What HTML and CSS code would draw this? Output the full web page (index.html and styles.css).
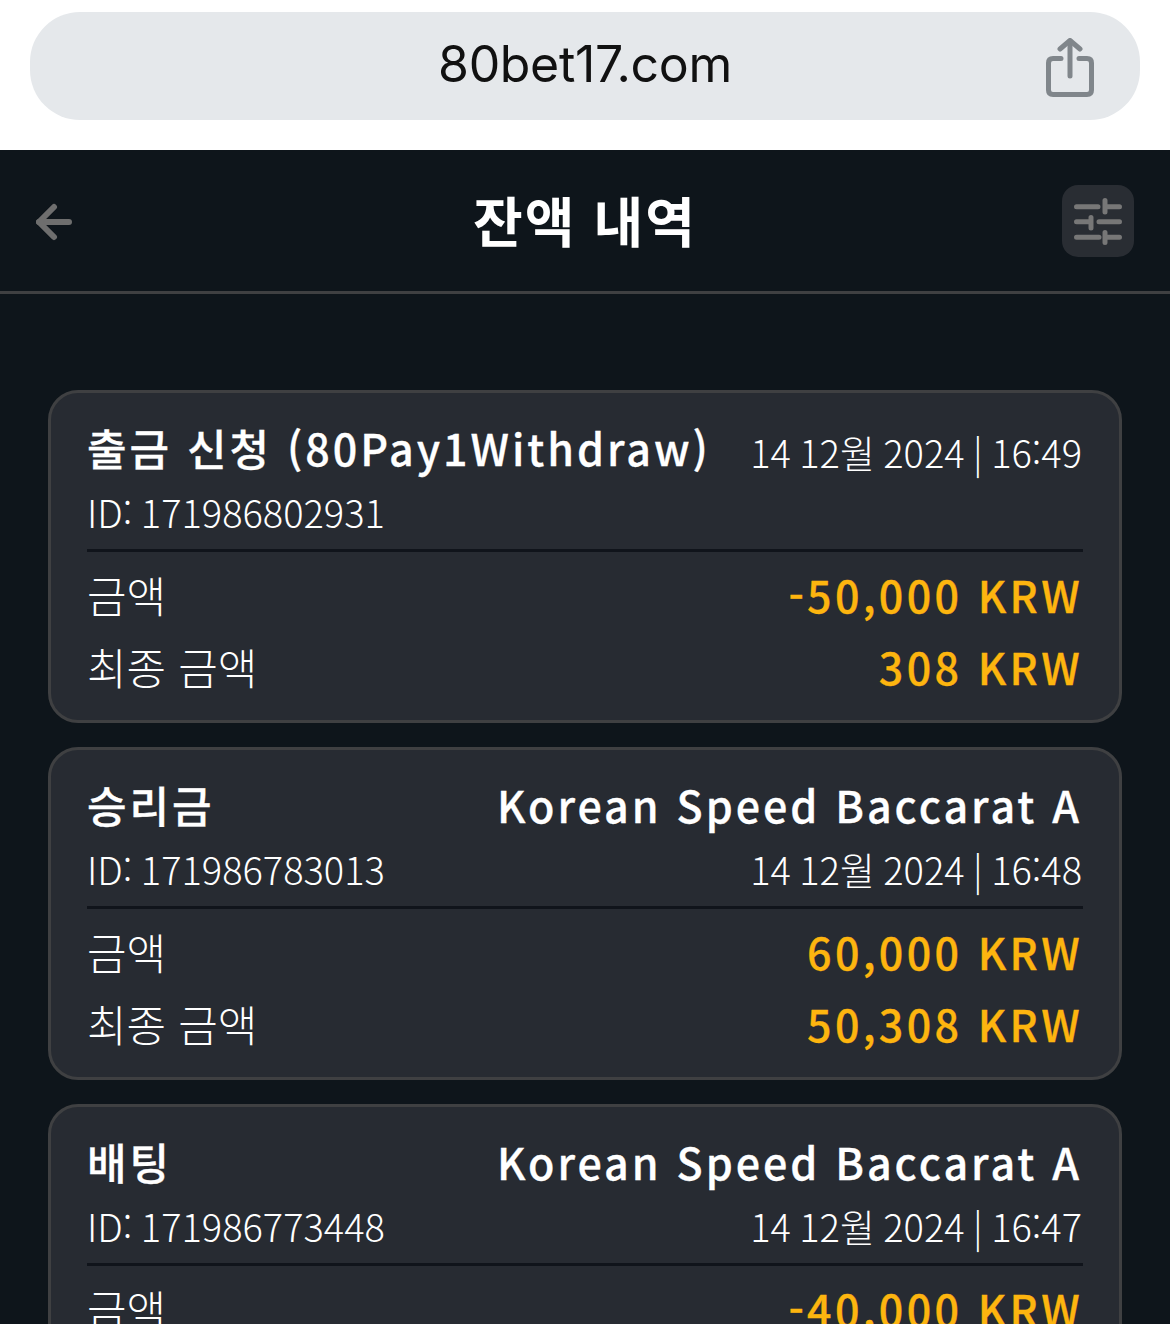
FILE: index.html
```html
<!DOCTYPE html>
<html lang="ko">
  <head>
    <meta charset="UTF-8" />
    <meta name="viewport" content="width=device-width, initial-scale=1.0" />
    <title>잔액 내역</title>
    <link rel="stylesheet" href="styles.css">
  </head>
  <body>
    <!-- Browser address bar -->
    <div class="browser-bar">
      <div class="address">
        <span class="url">80bet17.com</span>
        <svg class="share" width="50" height="60" viewBox="0 0 50 60" fill="none" stroke="#80868b" stroke-width="5" stroke-linecap="round" stroke-linejoin="round">
          <path d="M16 20.500H8Q3.500 20.500 3.500 25V52Q3.500 56.500 8 56.500H42Q46.500 56.500 46.500 52V25Q46.500 20.500 42 20.500H34" />
          <path d="M25 38V3" />
          <path d="M15 11L25 2.500L35 11" />
        </svg>
      </div>
    </div>

    <header class="topbar">
      <svg class="back" width="38" height="38" viewBox="0 0 38 38" fill="none" stroke="#6e6e6e" stroke-width="6" stroke-linecap="round" stroke-linejoin="round">
        <path d="M33 19H3" />
        <path d="M18 4L3 19L18 34" />
      </svg>
      <h1>잔액 내역</h1>
      <button class="filter">
        <svg width="48" height="48" viewBox="0 0 48 48" fill="none" stroke="#777" stroke-width="5" stroke-linecap="round">
          <path d="M2.500 9.700H24M31 9.700H45.500M31 3.500V15" />
          <path d="M2.500 24.700H17M25 24.700H45.500M17 20.500V31" />
          <path d="M2.500 40.300H25M31 40.300H45.500M31 35.500V45.500" />
        </svg>
      </button>
    </header>

    <main class="list">
      <section class="card">
        <div class="row title-row">
          <h2>출금 신청 (80Pay1Withdraw)</h2>
          <span class="meta">14 12월 2024 | 16:49</span>
        </div>
        <div class="row sub">
          <span class="meta">ID: 171986802931</span>
        </div>
        <div class="amounts">
          <div class="row line"><span>금액</span><strong>-50,000 KRW</strong></div>
          <div class="row line"><span>최종 금액</span><strong>308 KRW</strong></div>
        </div>
      </section>

      <section class="card">
        <div class="row title-row">
          <h2>승리금</h2>
          <h2>Korean Speed Baccarat A</h2>
        </div>
        <div class="row sub">
          <span class="meta">ID: 171986783013</span>
          <span class="meta">14 12월 2024 | 16:48</span>
        </div>
        <div class="amounts">
          <div class="row line"><span>금액</span><strong>60,000 KRW</strong></div>
          <div class="row line"><span>최종 금액</span><strong>50,308 KRW</strong></div>
        </div>
      </section>

      <section class="card">
        <div class="row title-row">
          <h2>배팅</h2>
          <h2>Korean Speed Baccarat A</h2>
        </div>
        <div class="row sub">
          <span class="meta">ID: 171986773448</span>
          <span class="meta">14 12월 2024 | 16:47</span>
        </div>
        <div class="amounts">
          <div class="row line"><span>금액</span><strong>-40,000 KRW</strong></div>
        </div>
      </section>
    </main>
  </body>
</html>
```

FILE: styles.css
```css
/* General Reset */
* {
  margin: 0;
  padding: 0;
  box-sizing: border-box;
}

html,
body {
  height: 1324px;
  overflow: hidden;
}

body {
  font-family: "Noto Sans CJK KR", "Noto Sans", sans-serif;
  background: #0e151b;
  color: #fff;
}

/* Browser bar */
.browser-bar {
  height: 150px;
  background: #fff;
  padding: 12px 30px 30px;
}

.address {
  position: relative;
  height: 108px;
  border-radius: 50px;
  background: #e5e8eb;
  padding-bottom: 4px;
  display: flex;
  justify-content: center;
  align-items: center;
}

.url {
  font-family: Inter, "Liberation Sans", sans-serif;
  font-size: 50px;
  letter-spacing: -0.36px;
  color: #111;
}

.share {
  position: absolute;
  top: 26px;
  right: 45px;
}

/* Header */
.topbar {
  height: 144px;
  border-bottom: 3px solid #3f4042;
  padding: 0 36px;
  display: flex;
  justify-content: space-between;
  align-items: center;
  position: relative;
}

.back {
  margin-top: 3px;
}

.topbar h1 {
  position: absolute;
  left: 0;
  right: 0;
  padding-bottom: 2px;
  text-align: center;
  font-size: 54px;
  font-weight: 700;
  letter-spacing: 2px;
  line-height: 1;
}

.filter {
  width: 72px;
  height: 72px;
  border: 0;
  border-radius: 16px;
  background: #292d33;
  display: flex;
  justify-content: center;
  align-items: center;
}

/* Cards */
.list {
  padding: 96px 48px 0;
  display: flex;
  flex-direction: column;
  gap: 24px;
}

.card {
  height: 333px;
  flex-shrink: 0;
  background: #272b32;
  border: 3px solid #3f4042;
  border-radius: 30px;
  padding: 21px 37px 0 36px;
}

.row {
  display: flex;
  justify-content: space-between;
  align-items: center;
}

.title-row {
  height: 66px;
}

.title-row .meta {
  margin-top: 10px;
}

.card h2 {
  font-size: 43px;
  font-weight: 500;
  -webkit-text-stroke: 0.3px #fff;
  letter-spacing: 2.95px;
  line-height: 1;
  white-space: nowrap;
}

.meta {
  font-size: 38px;
  font-weight: 300;
  word-spacing: -2.2px;
  line-height: 1;
  white-space: nowrap;
}

.sub {
  height: 64px;
  margin-bottom: 5px;
}

.amounts {
  border-top: 3px solid #10141b;
  margin-right: -1px;
  padding-top: 6px;
}

.line {
  height: 72px;
  font-size: 43px;
  font-weight: 300;
}

.line strong {
  font-size: 43px;
  font-weight: 500;
  -webkit-text-stroke: 0.3px #fdb50f;
  letter-spacing: 3.3px;
  color: #fdb50f;
}
```
